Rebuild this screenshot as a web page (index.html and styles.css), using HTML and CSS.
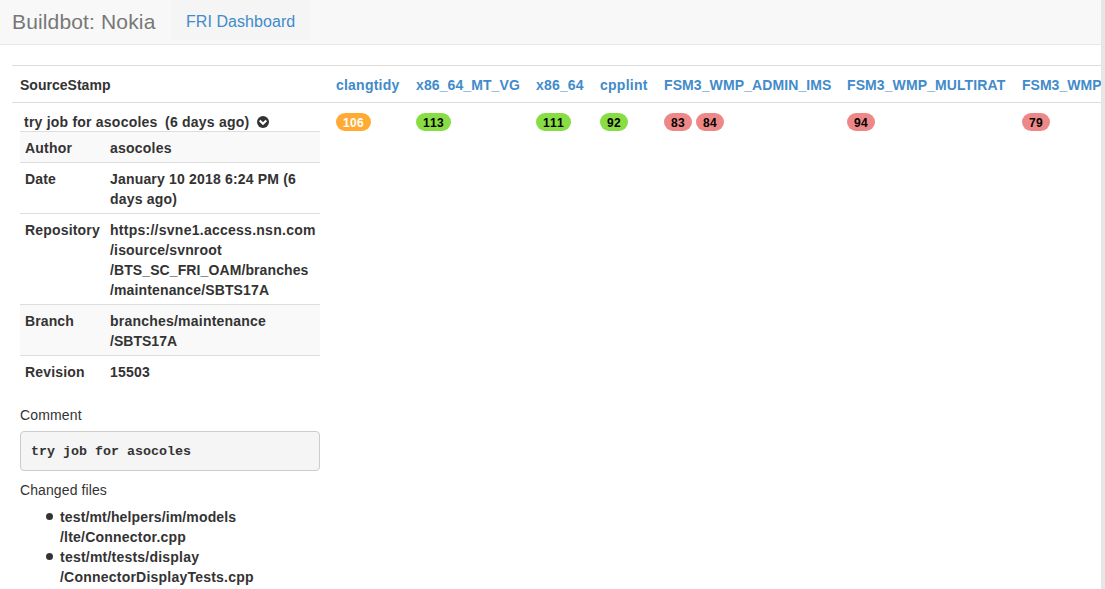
FILE: index.html
```html
<!DOCTYPE html>
<html lang="en">
<head>
<meta charset="utf-8">
<title>Buildbot: Nokia</title>
<link rel="stylesheet" href="styles.css">
</head>
<body>
<div class="page">
<header class="navbar">
  <span class="brand">Buildbot: Nokia</span>
  <a class="tab">FRI Dashboard</a>
</header>
<main class="content">
  <div class="row head">
    <div class="cell ls-0">SourceStamp</div>
    <a class="cell ls-4">clangtidy</a>
    <a class="cell ls-1">x86_64_MT_VG</a>
    <a class="cell ls-3">x86_64</a>
    <a class="cell ls-5">cpplint</a>
    <a class="cell ls-1">FSM3_WMP_ADMIN_IMS</a>
    <a class="cell ls-1">FSM3_WMP_MULTIRAT</a>
    <a class="cell ls-0">FSM3_WMP</a>
  </div>
  <div class="row">
    <div class="cell stamp">
      <div class="title"><span class="t-name">try job for asocoles</span><span class="t-age">(6 days ago)</span>
        <svg class="chevron" viewBox="0 0 12 12" width="12" height="12"><circle cx="6" cy="6" r="6" fill="#333"/><path d="M2.7 4.5 6 7.8 9.3 4.5" fill="none" stroke="#fff" stroke-width="2.1"/></svg>
      </div>
      <div class="details">
        <div class="detail odd"><div class="ls-4">Author</div><div class="ls-4">asocoles</div></div>
        <div class="detail"><div class="ls-3">Date</div><div class="ls-3">January 10 2018 6:24 PM (6<br>days ago)</div></div>
        <div class="detail"><div class="ls-3">Repository</div><div><span class="ls-5">https://svne1.access.nsn.com</span><br><span class="ls-3">/isource/svnroot</span><br><span class="ls-1">/BTS_SC_FRI_OAM/branches</span><br><span class="ls-2">/maintenance/SBTS17A</span></div></div>
        <div class="detail odd"><div class="ls-1">Branch</div><div><span class="ls-4">branches/maintenance</span><br><span class="ls-0">/SBTS17A</span></div></div>
        <div class="detail"><div class="ls-3">Revision</div><div class="ls-4">15503</div></div>
      </div>
      <div class="label ls-2">Comment</div>
      <pre class="comment">try job for asocoles</pre>
      <div class="label ls-1">Changed files</div>
      <ul class="files">
        <li><span class="ls-2">test/mt/helpers/im/models</span><br><span class="ls-4">/lte/Connector.cpp</span></li>
        <li><span class="ls-4">test/mt/tests/display</span><br><span class="ls-4">/ConnectorDisplayTests.cpp</span></li>
      </ul>
    </div>
    <div class="cell builds"><span class="badge warn">106</span></div>
    <div class="cell builds"><span class="badge ok">113</span></div>
    <div class="cell builds"><span class="badge ok">111</span></div>
    <div class="cell builds"><span class="badge ok">92</span></div>
    <div class="cell builds"><span class="badge fail">83</span><span class="badge fail">84</span></div>
    <div class="cell builds"><span class="badge fail">94</span></div>
    <div class="cell builds"><span class="badge fail">79</span></div>
  </div>
</main>
</div>
</body>
</html>
```
FILE: styles.css
```css
* { box-sizing: border-box; }
body {
  margin: 0;
  height: 589px;
  overflow: hidden;
  background: #fff;
  color: #333;
  font: 14px/20px "Liberation Sans", Arial, sans-serif;
}
.page { height: 589px; border-right: 4px solid #e6e6e6; overflow: hidden; }
.navbar {
  display: flex;
  height: 45px;
  padding-left: 12px;
  background: #f8f8f8;
  border-bottom: 1px solid #e7e7e7;
}
.brand {
  width: 159px;
  padding-top: 12px;
  font-size: 21px;
  letter-spacing: .15px;
  color: #777;
  white-space: nowrap;
}
.tab {
  width: 139px;
  height: 40px;
  padding: 12px 0 0 15px;
  border-radius: 4px;
  background: #f5f5f5;
  color: #428bca;
  font-size: 16px;
  letter-spacing: .06px;
  white-space: nowrap;
}
.content { padding: 20px 0 0 12px; }
.row {
  display: grid;
  grid-template-columns: 316px 80px 120px 64px 64px 183px 175px 87px;
  border-top: 1px solid #ddd;
}
.cell { padding: 8px; white-space: nowrap; font-weight: bold; }
.head { height: 37px; }
.head .cell { padding: 9px 0 8px 8px; }
a.cell { color: #428bca; }

.ls-0 { letter-spacing: .02px; }
.ls-1 { letter-spacing: .1px; }
.ls-2 { letter-spacing: .14px; }
.ls-3 { letter-spacing: .18px; }
.ls-4 { letter-spacing: .22px; }
.ls-5 { letter-spacing: .26px; }

.title {
  display: flex;
  align-items: center;
  height: 20px;
  padding: 2px 0 0 4px;
  letter-spacing: .22px;
}
.t-name { width: 141px; }
.t-age { width: 92px; }
.detail {
  display: grid;
  grid-template-columns: 85px 1fr;
  padding: 6px 5px 4px;
  border-top: 1px solid #ddd;
}
.odd { background: #f9f9f9; }
.details { margin-bottom: 19px; }
.label { font-weight: normal; }
.comment {
  height: 40px;
  margin: 6px 0 9px;
  padding: 10px;
  border: 1px solid #ccc;
  border-radius: 4px;
  background: #f5f5f5;
  font: bold 13.33px/20px "Liberation Mono", monospace;
}
.files { margin: 7px 0 0; padding-left: 26px; list-style: none; }
.files li { display: grid; grid-template-columns: 7px 1fr; column-gap: 7px; }
.files li::before {
  content: "";
  grid-row: 1 / 3;
  width: 7px;
  height: 7px;
  margin-top: 6px;
  border-radius: 50%;
  background: #333;
}
.files li span { grid-column: 2; }
.files br { display: none; }
.builds { display: flex; align-items: flex-start; gap: 4px; padding-top: 10px; }
.badge {
  height: 18px;
  padding: 3px 7px;
  border-radius: 9px;
  font-size: 12px;
  font-kerning: none;
  line-height: 14px;
  letter-spacing: .32px;
}
.warn { background: #fa3; color: #fff; }
.ok { background: #8d4; color: #000; }
.fail { background: #e88; color: #000; }
```
